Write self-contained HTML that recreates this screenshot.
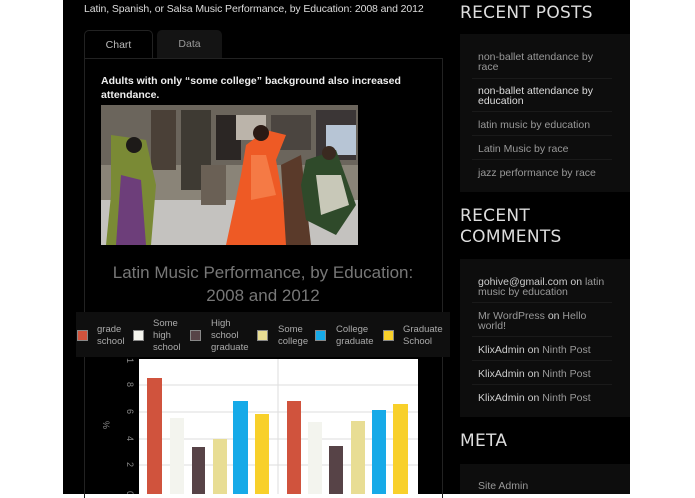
<!DOCTYPE html>
<html><head><style>
*{margin:0;padding:0;box-sizing:border-box}
body{width:695px;height:494px;background:#fff;position:relative;overflow:hidden;font-family:"Liberation Sans",sans-serif}
.page{position:absolute;left:63px;top:0;width:567px;height:494px;background:#000}
.a{position:absolute;white-space:nowrap}
.side{position:absolute;left:460px;width:170px;background:#0d0d0d}
.h{position:absolute;left:460px;color:#ddd;font-family:"DejaVu Sans",sans-serif;font-size:17px;letter-spacing:0.3px;line-height:21px}
.it{position:absolute;left:478px;font-size:10.5px;line-height:10px;color:#999;width:135px}
.sep{position:absolute;left:472px;width:140px;height:1px;background:#1a1a1a}
.leg{position:absolute;font-size:9.5px;color:#aaa;line-height:12px}
.sq{position:absolute;width:11px;height:11px;top:330px;border:1px solid #888}
</style></head><body>
<div class="page"></div>
<div class="a" style="left:84px;top:3px;font-size:10.5px;letter-spacing:-0.1px;color:#ddd">Latin, Spanish, or Salsa Music Performance, by Education: 2008 and 2012</div>
<div class="a" style="left:84px;top:30px;width:69px;height:29px;border:1px solid #222;border-bottom:none;border-radius:5px 5px 0 0;background:#000;color:#bbb;font-size:10.5px;text-align:center;line-height:28px">Chart</div>
<div class="a" style="left:157px;top:30px;width:65px;height:28px;background:#141414;border-radius:5px 5px 0 0;color:#999;font-size:10.5px;text-align:center;line-height:28px">Data</div>
<div class="a" style="left:84px;top:58px;width:359px;height:440px;border:1px solid #222;border-bottom:none"></div>
<div class="a" style="left:101px;top:74px;font-size:10.5px;font-weight:bold;color:#eee;line-height:14px">Adults with only “some college” background also increased<br>attendance.</div>
<svg class="a" style="left:101px;top:105px" width="257" height="140" viewBox="0 0 257 140">
<rect width="257" height="140" fill="#8a8478"/>
<rect y="0" width="257" height="60" fill="#6b655c"/>
<rect y="95" width="257" height="45" fill="#c4c2bf"/>
<rect x="50" y="5" width="25" height="60" fill="#4a4037"/>
<rect x="80" y="5" width="30" height="80" fill="#3e3a33"/>
<rect x="115" y="10" width="25" height="45" fill="#2b2624"/>
<rect x="135" y="10" width="30" height="25" fill="#bbb4aa"/>
<rect x="170" y="10" width="40" height="35" fill="#4b4540"/>
<rect x="215" y="5" width="40" height="50" fill="#3b3636"/>
<rect x="225" y="20" width="30" height="30" fill="#b7c5d5"/>
<rect x="100" y="60" width="25" height="40" fill="#6a6055"/>
<path d="M10 30 L45 35 L55 80 L50 140 L5 140 L10 90 Z" fill="#7a8a35"/>
<path d="M20 70 L40 75 L45 140 L15 140 Z" fill="#6d3e7a"/>
<path d="M145 40 L165 25 L185 30 L175 55 L190 140 L125 140 L140 70 Z" fill="#ee5a25"/>
<path d="M150 50 L165 50 L175 90 L150 95 Z" fill="#f57a45"/>
<path d="M180 60 L200 50 L210 140 L185 140 Z" fill="#5a3a2a"/>
<path d="M205 55 L235 45 L255 100 L235 130 L205 115 L200 80 Z" fill="#2f4a2a"/>
<path d="M215 70 L240 70 L248 100 L220 110 Z" fill="#c8c8b8"/>
<circle cx="160" cy="28" r="8" fill="#2a1a14"/>
<circle cx="228" cy="48" r="7" fill="#3a2a20"/>
<circle cx="33" cy="40" r="8" fill="#1d1a18"/>
</svg>
<div class="a" style="left:84px;top:261px;width:358px;text-align:center;font-size:17px;line-height:23px;color:#777">Latin Music Performance, by Education:<br>2008 and 2012</div>
<div class="a" style="left:76px;top:312px;width:374px;height:45px;background:#0f0f0f"></div>
<div class="sq" style="left:77px;background:#d0533d"></div><div class="leg" style="left:97px;top:324px">grade<br>school</div>
<div class="sq" style="left:133px;background:#f5f5ee"></div><div class="leg" style="left:153px;top:318px">Some<br>high<br>school</div>
<div class="sq" style="left:190px;background:#574347"></div><div class="leg" style="left:211px;top:318px">High<br>school<br>graduate</div>
<div class="sq" style="left:257px;background:#e8dd94"></div><div class="leg" style="left:278px;top:324px">Some<br>college</div>
<div class="sq" style="left:315px;background:#16aae8"></div><div class="leg" style="left:336px;top:324px">College<br>graduate</div>
<div class="sq" style="left:383px;background:#f8d02a"></div><div class="leg" style="left:403px;top:324px">Graduate<br>School</div>
<svg class="a" style="left:95px;top:357px" width="330" height="137">
<rect x="44" y="2" width="279" height="135" fill="#fff"/>
<g stroke="#ddd" stroke-width="1"><line x1="44" x2="323" y1="28" y2="28"/><line x1="44" x2="323" y1="55" y2="55"/><line x1="44" x2="323" y1="82" y2="82"/><line x1="44" x2="323" y1="108" y2="108"/><line x1="183" x2="183" y1="2" y2="137"/></g>
<g fill="#d0533d"><rect x="52" y="21" width="15" height="116"/><rect x="192" y="44" width="14" height="93"/></g>
<g fill="#f3f4ee"><rect x="75" y="61" width="14" height="76"/><rect x="213" y="65" width="14" height="72"/></g>
<g fill="#574347"><rect x="97" y="90" width="13" height="47"/><rect x="234" y="89" width="14" height="48"/></g>
<g fill="#e8dd94"><rect x="118" y="82" width="14" height="55"/><rect x="256" y="64" width="14" height="73"/></g>
<g fill="#16aae8"><rect x="138" y="44" width="15" height="93"/><rect x="277" y="53" width="14" height="84"/></g>
<g fill="#f8d02a"><rect x="160" y="57" width="14" height="80"/><rect x="298" y="47" width="15" height="90"/></g>
<g fill="#888" font-family="Liberation Sans" font-size="9">
<text transform="translate(32,134) rotate(90)">0</text>
<text transform="translate(32,105) rotate(90)">2</text>
<text transform="translate(32,79) rotate(90)">4</text>
<text transform="translate(32,52) rotate(90)">6</text>
<text transform="translate(32,25) rotate(90)">8</text>
<text transform="translate(32,1) rotate(90)">1</text>
<text transform="translate(8,64) rotate(90)">%</text>
</g>
</svg>
<div class="h" style="top:3px">RECENT POSTS</div>
<div class="side" style="top:34px;height:158px"></div>
<div class="it" style="top:52px">non-ballet attendance by<br>race</div>
<div class="sep" style="top:78px"></div>
<div class="it" style="top:86px;color:#ddd">non-ballet attendance by<br>education</div>
<div class="sep" style="top:111px"></div>
<div class="it" style="top:120px">latin music by education</div>
<div class="sep" style="top:135px"></div>
<div class="it" style="top:144px">Latin Music by race</div>
<div class="sep" style="top:159px"></div>
<div class="it" style="top:168px">jazz performance by race</div>
<div class="h" style="top:206px">RECENT<br>COMMENTS</div>
<div class="side" style="top:259px;height:158px"></div>
<div class="it" style="top:277px"><span style="color:#ccc">gohive@gmail.com on</span> latin<br>music by education</div>
<div class="sep" style="top:302px"></div>
<div class="it" style="top:311px">Mr WordPress <span style="color:#ccc">on</span> Hello<br>world!</div>
<div class="sep" style="top:336px"></div>
<div class="it" style="top:345px"><span style="color:#ccc">KlixAdmin on</span> Ninth Post</div>
<div class="sep" style="top:360px"></div>
<div class="it" style="top:369px"><span style="color:#ccc">KlixAdmin on</span> Ninth Post</div>
<div class="sep" style="top:384px"></div>
<div class="it" style="top:393px"><span style="color:#ccc">KlixAdmin on</span> Ninth Post</div>
<div class="h" style="top:431px">META</div>
<div class="side" style="top:464px;height:30px"></div>
<div class="it" style="top:481px">Site Admin</div>
</body></html>
